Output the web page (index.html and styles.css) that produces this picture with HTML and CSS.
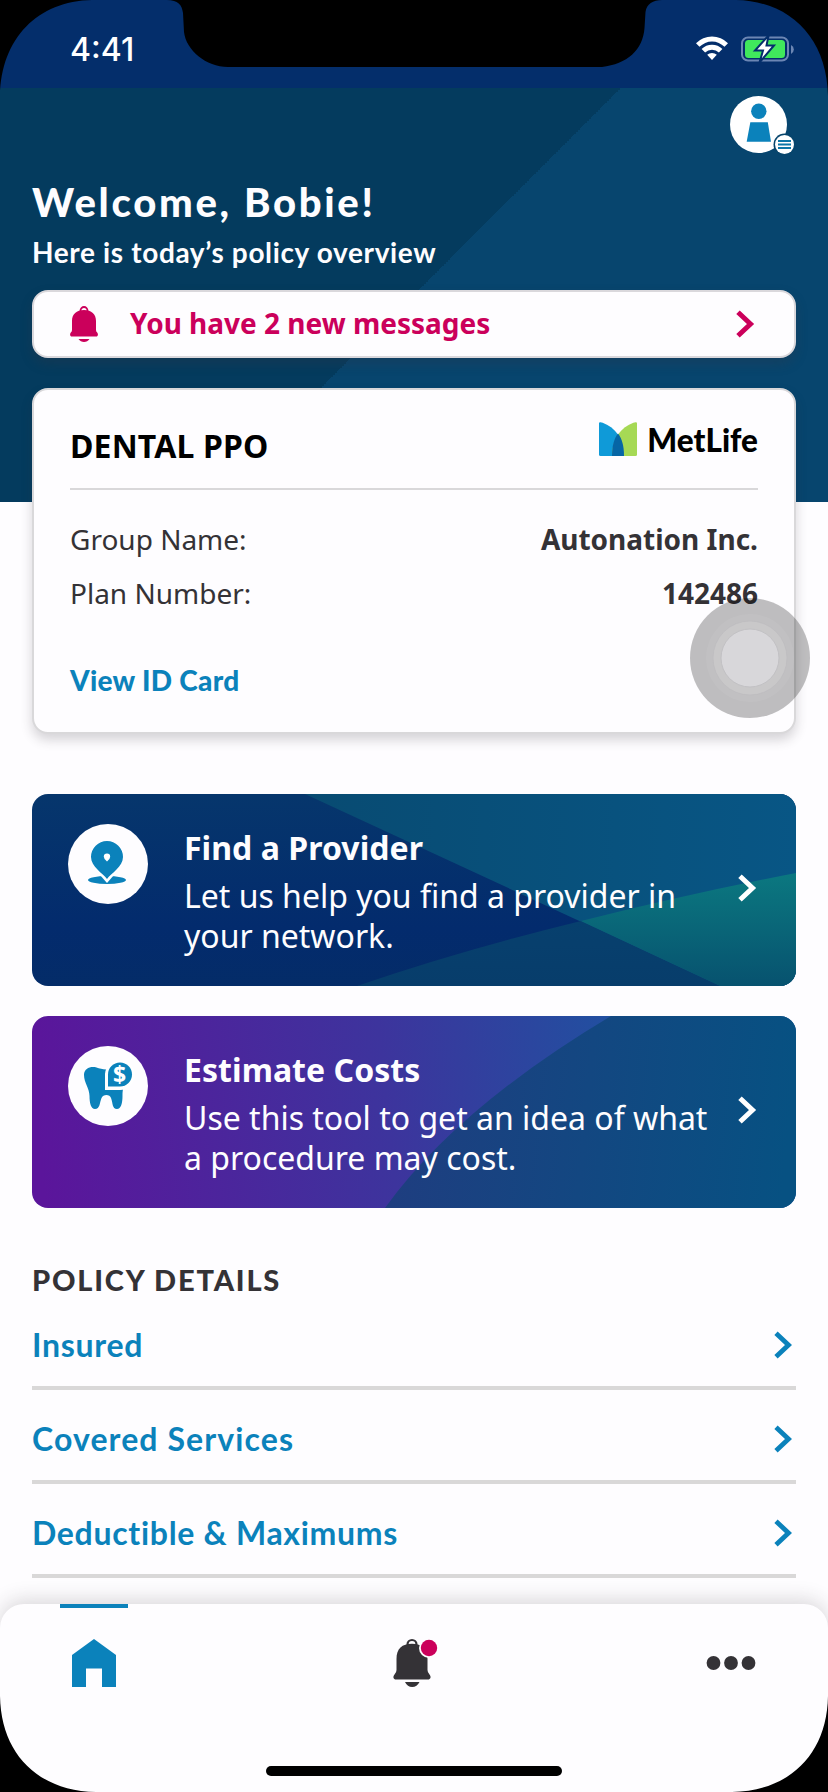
FILE: index.html
```html
<!DOCTYPE html>
<html lang="en">
<head>
<meta charset="utf-8">
<title>Policy overview</title>
<link rel="stylesheet" href="styles.css">
</head>
<body>
<div class="screen">
  <header class="status">
    <span class="time">4:41</span>
    <span class="status-icons">
      <svg width="32" height="24" viewBox="0 0 32 24" fill="#fff">
        <path d="M0 7.2A22.4 22.4 0 0 1 32 7.2L28.5 10.8A17.6 17.6 0 0 0 3.500 10.8Z"/>
        <path d="M5.600 13A14.800 14.800 0 0 1 26.400 13L22.900 16.500A9.800 9.800 0 0 0 9.100 16.500Z"/>
        <path d="M11.200 18.800A7 7 0 0 1 20.800 18.800L16 24Z"/>
      </svg>
      <svg width="54" height="26" viewBox="0 0 54 26">
        <rect x="1" y="1.500" width="46" height="23" rx="6" fill="none" stroke="#6c86b4" stroke-width="2"/>
        <path d="M50 9a5 5 0 0 1 0 9z" fill="#6c86b4"/>
        <rect x="4" y="4" width="40" height="18" rx="3.500" fill="#40e85c"/>
        <path d="M27 0 14 14.500H22L18.500 26.500 33 9.500H25.500L27.500 0Z" fill="#fff" stroke="#042e6b" stroke-width="2"/>
      </svg>
    </span>
  </header>

  <main class="content">
    <div class="profile">
      <svg width="66" height="60" viewBox="0 0 66 60">
        <circle cx="28.500" cy="28.500" r="28.500" fill="#fff"/>
        <circle cx="28.800" cy="15.200" r="7.700" fill="#0b82bb"/>
        <path d="M20.300 26.300H37.800L41 45.800H16.700Z" fill="#0b82bb"/>
        <circle cx="54.500" cy="48.500" r="11" fill="#07456c"/>
        <circle cx="54.500" cy="48.500" r="9.500" fill="#fff"/>
        <path d="M48 45H61M48 48.500H61M48 52H61" stroke="#0b76a8" stroke-width="1.900"/>
      </svg>
    </div>
    <h1 class="welcome">Welcome, Bobie!</h1>
    <p class="subtitle">Here is today’s policy overview</p>

    <a class="messages">
      <svg width="28" height="36" viewBox="0 0 28 36">
        <circle cx="14" cy="4.500" r="3.500" fill="none" stroke="#cb005b" stroke-width="1.800"/>
        <path d="M2 15C2 8 6.500 4 14 4S26 8 26 15V24Q26 25.500 27.200 26.500C28.500 28 28 30.500 26 30.500H2C0 30.500-.5 28 .8 26.500Q2 25.500 2 24Z" fill="#cb005b"/>
        <path d="M8.500 33H19.500Q17.500 36 14 36T8.500 33Z" fill="#cb005b"/>
      </svg>
      <span class="messages-text">You have 2 new messages</span>
      <svg class="chevron" width="19" height="28" viewBox="0 0 19 28"><path d="M2 2.200 14.500 14 2 25.800" fill="none" stroke="#cb005b" stroke-width="5"/></svg>
    </a>

    <section class="plan">
      <div class="plan-head">
        <h2 class="plan-title">DENTAL PPO</h2>
        <div class="brand">
          <svg width="38" height="34" viewBox="0 0 38 34">
            <path d="M0 1.200Q0 0 1.500.2C13 3 25 14 25 34H1.500Q0 34 0 32.500Z" fill="#0f9ad8"/>
            <path d="M38 1.200Q38 0 36.500.2C25 3 13 14 13 34H36.500Q38 34 38 32.500Z" fill="#a6d955"/>
            <path d="M19 11.500C15 16.500 13 24 13 34H25C25 24 23 16.500 19 11.500Z" fill="#0666a5"/>
          </svg>
          <span class="brand-name">MetLife</span>
        </div>
      </div>
      <dl class="facts">
        <div class="fact"><dt>Group Name:</dt><dd>Autonation Inc.</dd></div>
        <div class="fact"><dt>Plan Number:</dt><dd>142486</dd></div>
      </dl>
      <a class="id-link">View ID Card</a>
      <svg class="touch" width="120" height="120" viewBox="0 0 120 120">
        <circle cx="60" cy="60" r="60" fill="#000" fill-opacity=".25"/>
        <circle cx="60" cy="60" r="44" fill="#fff" fill-opacity=".06"/>
        <circle cx="60" cy="60" r="37" fill="#fff" fill-opacity=".13" stroke="#bdbcbf" stroke-width=".7"/>
        <circle cx="60" cy="60" r="29" fill="#d8d7da" stroke="#c2c1c4" stroke-width="1"/>
      </svg>
    </section>

    <a class="promo promo-find">
      <svg class="art" width="764" height="192" viewBox="0 0 764 192">
        <defs>
          <linearGradient id="navy" x1="0" y1="0" x2="0" y2="1"><stop offset="0" stop-color="#06366c"/><stop offset=".7" stop-color="#032b6d"/><stop offset="1" stop-color="#042c68"/></linearGradient>
          <linearGradient id="sky" x1="0" y1="0" x2="1" y2="0"><stop offset="0" stop-color="#084b72"/><stop offset="1" stop-color="#085685"/></linearGradient>
          <linearGradient id="deep" x1="0" y1="0" x2="0" y2="1"><stop offset="0" stop-color="#07406e"/><stop offset="1" stop-color="#073d6b"/></linearGradient>
          <linearGradient id="teal" x1="0" y1="0" x2="0" y2="1"><stop offset="0" stop-color="#0b7880"/><stop offset="1" stop-color="#07526f"/></linearGradient>
        </defs>
        <path d="M0 0H764V192H0Z" fill="url(#navy)"/>
        <path d="M273 0H764V192H688Z" fill="url(#sky)"/>
        <path d="M325 192Q430 156 549 127L688 192Z" fill="url(#deep)"/>
        <path d="M549 127Q660 99 764 79V192H688Z" fill="url(#teal)"/>
      </svg>
      <span class="disc">
        <svg width="80" height="80" viewBox="0 0 80 80">
          <ellipse cx="39" cy="56" rx="19" ry="4" fill="#0b82bb"/>
          <path d="M28.500 47 39 59 49.500 47Z" fill="#fff"/>
          <path d="M39 55C35 49.500 23 42.500 23 33a16 16 0 0 1 32 0C55 42.500 43 49.500 39 55Z" fill="#0b82bb"/>
          <path d="M39 29.500a3.200 3.200 0 0 1 3.200 3.200Q42.200 35 39 37.500 35.800 35 35.800 32.700A3.200 3.200 0 0 1 39 29.500Z" fill="#fff"/>
        </svg>
      </span>
      <span class="promo-copy">
        <strong class="promo-title">Find a Provider</strong>
        <span class="promo-text">Let us help you find a provider in<br>your network.</span>
      </span>
      <svg class="chevron" width="19" height="28" viewBox="0 0 19 28"><path d="M2 2.200 14.500 14 2 25.800" fill="none" stroke="#fff" stroke-width="5"/></svg>
    </a>

    <a class="promo promo-costs">
      <svg class="art" width="764" height="192" viewBox="0 0 764 192">
        <defs>
          <linearGradient id="violet" gradientUnits="userSpaceOnUse" x1="0" y1="60" x2="580" y2="0"><stop offset="0" stop-color="#5b159b"/><stop offset=".6" stop-color="#3d349d"/><stop offset="1" stop-color="#2150a0"/></linearGradient>
          <linearGradient id="ocean" gradientUnits="userSpaceOnUse" x1="360" y1="0" x2="764" y2="40"><stop offset="0" stop-color="#1f3d80"/><stop offset="1" stop-color="#075182"/></linearGradient>
        </defs>
        <path d="M0 0H764V192H0Z" fill="url(#violet)"/>
        <path d="M353 192Q425 92 579 0H764V192Z" fill="url(#ocean)"/>
      </svg>
      <span class="disc">
        <svg width="80" height="80" viewBox="0 0 80 80">
          <path d="M16 29C16 22 23 20 28.500 21.500 33 23 38 24.500 43 22.500L50 21Q56 25 56 32C56 42 54.500 42 54.500 50 54.500 57 53 63 49 63 44 63 45 57 43 52 42 48 35 48 33.500 52 31.500 57 32 63 27 63 23 63 21.500 57 21.500 50 21.500 42 16 37 16 29Z" fill="#0b82bb"/>
          <path d="M37 44V28A15 15 0 1 1 52 44Z" fill="#fff"/>
          <path d="M40 40.500V28.500A12 12 0 1 1 52 40.500Z" fill="#0b82bb"/>
          <text class="coin" x="51.500" y="36.800">$</text>
        </svg>
      </span>
      <span class="promo-copy">
        <strong class="promo-title">Estimate Costs</strong>
        <span class="promo-text">Use this tool to get an idea of what<br>a procedure may cost.</span>
      </span>
      <svg class="chevron" width="19" height="28" viewBox="0 0 19 28"><path d="M2 2.200 14.500 14 2 25.800" fill="none" stroke="#fff" stroke-width="5"/></svg>
    </a>

    <h2 class="details-title">POLICY DETAILS</h2>
    <nav class="details">
      <a class="detail"><span>Insured</span><svg class="chevron" width="19" height="28" viewBox="0 0 19 28"><path d="M2 2.200 14.500 14 2 25.800" fill="none" stroke="#0b82bb" stroke-width="4.800"/></svg></a>
      <a class="detail"><span class="detail-wide">Covered Services</span><svg class="chevron" width="19" height="28" viewBox="0 0 19 28"><path d="M2 2.200 14.500 14 2 25.800" fill="none" stroke="#0b82bb" stroke-width="4.800"/></svg></a>
      <a class="detail"><span>Deductible &amp; Maximums</span><svg class="chevron" width="19" height="28" viewBox="0 0 19 28"><path d="M2 2.200 14.500 14 2 25.800" fill="none" stroke="#0b82bb" stroke-width="4.800"/></svg></a>
    </nav>
  </main>

  <footer class="tabbar">
    <div class="tabs">
      <a class="tab tab-active"><svg width="44" height="48" viewBox="0 0 44 48"><path d="M0 16 22 0 44 16V48H30V29.500H14V48H0Z" fill="#0b82bb"/></svg></a>
      <a class="tab">
        <svg width="40" height="48" viewBox="0 0 40 48" overflow="visible">
          <circle cx="19" cy="5.500" r="4.500" fill="none" stroke="#343236" stroke-width="2.200"/>
          <path d="M3.500 20C3.500 9.500 9 4.800 19 4.800S34.500 9.500 34.500 20V31Q34.500 33.500 36.500 35.500C38.500 38 37.500 40.500 35 40.500H3C.5 40.500-.5 38 1.500 35.500Q3.500 33.500 3.500 31Z" fill="#343236"/>
          <path d="M12 43H26.500Q24 48 19.200 48T12 43Z" fill="#343236"/>
          <circle cx="36" cy="9" r="10" fill="#fefdff"/>
          <circle cx="36" cy="9" r="8.200" fill="#cb005b"/>
        </svg>
      </a>
      <a class="tab"><svg width="50" height="48" viewBox="0 0 50 48" fill="#343236"><circle cx="7.500" cy="24" r="6.900"/><circle cx="25" cy="24" r="6.900"/><circle cx="42.500" cy="24" r="6.900"/></svg></a>
    </div>
    <div class="home-bar"></div>
  </footer>

  <svg class="bezel" width="828" height="1792" viewBox="0 0 828 1792">
    <path d="M167 0C178 0 182 5 183 13L184 32C186 50 206 67 228 67H602C627 64 643 50 644.500 28L645.500 12C646.500 4 653 0 662 0Z"/>
    <path d="M0 0H92C38 1 1 38 0 96ZM828 0H736C790 1 827 38 828 96ZM0 1792H96C38 1791 1 1754 0 1696ZM828 1792H732C790 1791 827 1754 828 1696Z"/>
  </svg>
</div>
</body>
</html>
```
FILE: styles.css
```css
* { box-sizing: border-box; }
body { margin: 0; background: #000; }
h1, h2, p, dl, dd { margin: 0; }
svg { display: block; flex: none; }

.screen {
  position: relative;
  display: flex;
  flex-direction: column;
  width: 828px;
  height: 1792px;
  overflow: hidden;
  background: #fefdff;
  color: #343236;
  font-family: "Noto Sans", sans-serif;
}
.bezel { position: absolute; inset: 0; z-index: 5; pointer-events: none; }

.status {
  flex: none;
  display: flex;
  justify-content: space-between;
  height: 88px;
  padding: 36px 33px 0 70px;
  background: #042e6b;
}
.time { font: 500 32px/28px Inter, sans-serif; color: #fff; letter-spacing: 0; }
.status-icons { display: flex; gap: 13px; }

.content {
  padding: 8px 32px 0;
  background: linear-gradient(135deg, #043b5e 50%, #07456e 50%) 0 0 / 828px 414px no-repeat;
}
.profile { display: flex; justify-content: flex-end; height: 60px; }
.welcome {
  margin-top: 22px;
  font: 900 40px/48px Lato, sans-serif;
  letter-spacing: 2.7px;
  color: #fefdff;
  white-space: nowrap;
}
.subtitle {
  margin-top: 6px;
  font: 700 28px/40px Lato, sans-serif;
  letter-spacing: .64px;
  color: #fefdff;
}

.messages {
  display: flex;
  align-items: center;
  height: 68px;
  margin-top: 18px;
  padding: 0 39px 0 36px;
  border: 2px solid #dad8dc;
  border-radius: 16px;
  background: #fefdff;
  box-shadow: 0 6px 12px rgba(60, 50, 60, .25);
}
.messages-text {
  flex: 1;
  margin-left: 32px;
  padding-bottom: 2px;
  font-size: 28px;
  font-weight: 700;
  line-height: 40px;
  color: #cb005b;
}

.plan {
  position: relative;
  height: 346px;
  margin-top: 30px;
  padding: 0 36px;
  border: 2px solid #d9d8da;
  border-radius: 16px;
  background: #fefdff;
  box-shadow: 0 6px 12px rgba(50, 45, 55, .2);
}
.plan-head {
  display: flex;
  align-items: center;
  justify-content: space-between;
  height: 100px;
  border-bottom: 2px solid #d9d8da;
}
.plan-title { padding-top: 14px; font-size: 32px; font-weight: 700; line-height: 40px; letter-spacing: .15px; color: #000; }
.brand { display: flex; align-items: center; gap: 10px; }
.brand-name { padding-top: 2px; font: 900 31.5px/34px Lato, sans-serif; color: #000; }
.facts { padding-top: 22px; }
.fact { display: flex; justify-content: space-between; font-size: 28px; line-height: 54px; }
.fact dd { font-weight: 700; }
.id-link {
  display: block;
  margin-top: 40px;
  font: 900 28px/40px Lato, sans-serif;
  letter-spacing: .3px;
  color: #0b82bb;
}
.touch { position: absolute; left: 656px; top: 208px; z-index: 2; }

.promo {
  position: relative;
  display: flex;
  align-items: flex-start;
  height: 192px;
  margin-top: 30px;
  padding: 30px 39px 0 36px;
  border-radius: 16px;
  overflow: hidden;
  color: #fefdff;
}
.promo-find { margin-top: 60px; }
.art { position: absolute; inset: 0; }
.disc, .promo-copy, .promo .chevron { position: relative; }
.disc { width: 80px; height: 80px; border-radius: 50%; background: #fefdff; }
.coin { font: 700 23px "Noto Sans", sans-serif; fill: #fff; text-anchor: middle; }
.promo-copy { flex: 1; margin: 4px 0 0 36px; white-space: nowrap; }
.promo-title { display: block; font-size: 32px; font-weight: 700; line-height: 40px; letter-spacing: .05px; }
.promo-text { display: block; margin-top: 8px; font-size: 32px; line-height: 40px; }
.promo .chevron { margin-top: 50px; }

.details-title {
  height: 37px;
  margin-top: 51px;
  padding-top: 1px;
  font: 900 29px/40px Lato, sans-serif;
  letter-spacing: 1.8px;
}
.detail {
  display: flex;
  align-items: center;
  justify-content: space-between;
  height: 94px;
  padding: 7px 3px 0 0;
  border-bottom: 4px solid #d9d8d8;
  font: 700 32px/40px Lato, sans-serif;
  letter-spacing: .7px;
  color: #0b82bb;
}
.detail-wide { letter-spacing: 1.1px; }

.tabbar {
  flex: none;
  height: 188px;
  margin-top: auto;
  border-radius: 24px 24px 0 0;
  background: #fefdff;
  box-shadow: 0 -4px 20px rgba(50, 45, 50, .18);
}
.tabs { display: flex; justify-content: space-between; height: 162px; padding: 0 63px 0 60px; }
.tab { display: flex; flex-direction: column; align-items: center; width: 68px; padding-top: 35px; }
.tab-active { padding-top: 31px; border-top: 4px solid #0b82bb; }
.home-bar { width: 296px; height: 10px; margin: 0 auto; border-radius: 5px; background: #000; }
```
